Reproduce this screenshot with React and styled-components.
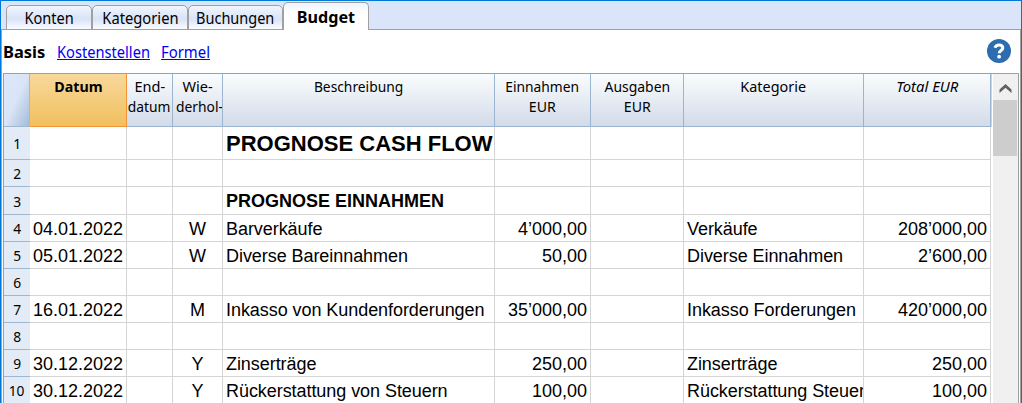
import React from 'react';
import styled, { createGlobalStyle, css } from 'styled-components';

const GlobalStyle = createGlobalStyle`
  * { box-sizing: border-box; }
  body { margin: 0; background: #fff; overflow: hidden; }
`;

const COLUMNS = '96px 1px 45px 1px 49px 1px 271px 1px 95px 1px 92px 1px 179px 1px 126px 1px';

const Window = styled.div`
  display: flex;
  flex-direction: column;
  width: 1022px;
  height: 403px;
  border: solid #0078d7;
  border-width: 1px 1px 0;
  background: #fff;
  color: #000;
  font: 16px/22px 'Noto Sans', 'Open Sans', sans-serif;
  overflow: hidden;
`;

const TabBar = styled.nav`
  display: flex;
  align-items: flex-end;
  flex: none;
  height: 29px;
  padding-left: 5px;
  background: linear-gradient(to top, #a0a0a0 1px, #dae5f9 1px);
`;

const Tab = styled.div`
  display: flex;
  justify-content: center;
  width: ${(p) => p.$width}px;
  height: 25px;
  padding-top: 1px;
  border: 1px solid #a0a0a0;
  border-radius: 5px 5px 0 0;
  background: linear-gradient(#f1f6fe 0, #dbe5f8 50%, #dbe5f8 60%, #fafcff 100%);
  ${(p) =>
    p.$active &&
    css`
      height: 28px;
      padding-top: 3px;
      border-bottom: 0;
      background: linear-gradient(#edf3fe 0, #fff 40%);
      font-weight: bold;
    `}
`;

const Fit = styled.span`
  display: inline-block;
  white-space: nowrap;
  transform: scaleX(${(p) => p.$x});
  transform-origin: ${(p) => p.$from || 'center'};
  text-decoration: inherit;
  text-underline-offset: inherit;
`;

const Body = styled.main`
  display: flex;
  flex-direction: column;
  flex: 1;
  min-height: 0;
  border: solid #a0a0a0;
  border-width: 0 1px;
  padding: 0 1px;
`;

const ViewBar = styled.div`
  display: flex;
  align-items: center;
  flex: none;
  height: 43px;
  padding-right: 8px;
`;

const View = styled.a`
  flex: none;
  width: ${(p) => p.$width}px;
  color: ${(p) => (p.$current ? '#000' : '#0000f5')};
  font-weight: ${(p) => (p.$current ? 'bold' : 'normal')};
  text-decoration: ${(p) => (p.$current ? 'none' : 'underline 1px')};
  text-decoration-skip-ink: none;
  text-underline-offset: 1px;
`;

const HelpIcon = styled.svg`
  display: block;
  flex: none;
  width: 24px;
  height: 24px;
  margin: 0 0 2px auto;
`;

const Sheet = styled.section`
  display: flex;
  flex: 1;
  min-height: 0;
  border: solid #a0a0a0;
  border-width: 1px 1px 0;
`;

const Grid = styled.div`
  flex: none;
  width: 989px;
`;

const HeaderRow = styled.div`
  display: grid;
  grid-template-columns: 26px ${COLUMNS} 1px;
  height: 53px;
`;

const Corner = styled.div`
  border-right: 1px solid #a3bad3;
  border-bottom: 1px solid #9db7d3;
  background: linear-gradient(115deg, #dce7fb 0, #d9e4f6 50%, #a5bbd8 100%);
`;

const HeaderCell = styled.div`
  grid-column: span 2;
  padding: 2px 0 0;
  border-right: 1px solid #9bb5d1;
  border-bottom: 1px solid #9bb5d1;
  background: linear-gradient(#fafdfe, #d3dbe9);
  font-size: 15px;
  line-height: 20px;
  font-style: ${(p) => (p.$italic ? 'italic' : 'normal')};
  overflow: hidden;
  ${(p) =>
    p.$selected &&
    css`
      border-color: #f29436;
      background: linear-gradient(#f8d89b, #f1c05e);
      font-weight: bold;
    `}
`;

const HeaderLine = styled.div`
  display: flex;
  justify-content: center;
  padding-left: ${(p) => p.$indent || 0}px;
`;

const HeaderEdge = styled.div`
  background: #c3d6f4;
`;

const Row = styled.div`
  display: grid;
  grid-template-columns: 26px ${COLUMNS};
  height: ${(p) => p.$height}px;
`;

const RowNumber = styled.div`
  display: flex;
  align-items: center;
  justify-content: center;
  border-bottom: 1px solid #9db7d3;
  background: #e3ebf7;
  font-size: 15px;
  line-height: 20px;
`;

const Cell = styled.div`
  grid-column: span 2;
  display: flex;
  align-items: center;
  justify-content: ${(p) => p.$align || 'flex-start'};
  min-width: 0;
  padding: 1px 3px 0;
  border-right: 1px solid #d4d4d4;
  border-bottom: 1px solid #d4d4d4;
  font: ${(p) => (p.$heading ? 'bold' : 'normal')} ${(p) => (p.$heading === 'large' ? 22 : 18)}px/20px
    'Liberation Sans', Arial, sans-serif;
  letter-spacing: ${(p) => (p.$prose ? '-0.06px' : 'normal')};
  white-space: nowrap;
  overflow: hidden;
`;

const ScrollBar = styled.div`
  display: flex;
  flex-direction: column;
  width: 25px;
  padding-right: 1px;
  margin-left: auto;
  background: #f0f0f0;
`;

const ScrollButton = styled.svg`
  display: block;
  width: 24px;
  height: 26px;
`;

const Thumb = styled.div`
  height: 56px;
  background: #cdcdcd;
`;

const tabs = [
  { label: 'Konten', width: 86, x: 0.91 },
  { label: 'Kategorien', width: 96, x: 0.92 },
  { label: 'Buchungen', width: 95, x: 0.905 },
  { label: 'Budget', width: 86, x: 1.01, active: true },
];

const headers = [
  { lines: [['Datum', 0.95]], selected: true },
  { lines: [['End-', 0.97], ['datum', 0.92]] },
  { lines: [['Wie-', 0.97], ['derhol-', 0.92, 3]] },
  { lines: [['Beschreibung', 0.92]] },
  { lines: [['Einnahmen', 0.92], ['EUR', 0.94]] },
  { lines: [['Ausgaben', 0.93], ['EUR', 0.94]] },
  { lines: [['Kategorie', 0.96]] },
  { lines: [['Total EUR', 0.99]], italic: true },
];

const rows = [
  { height: 33, text: 'PROGNOSE CASH FLOW', heading: 'large' },
  { height: 27 },
  { height: 28, text: 'PROGNOSE EINNAHMEN', heading: 'small' },
  { date: '04.01.2022', repeat: 'W', text: 'Barverkäufe', income: '4’000,00', category: 'Verkäufe', total: '208’000,00' },
  { date: '05.01.2022', repeat: 'W', text: 'Diverse Bareinnahmen', income: '50,00', category: 'Diverse Einnahmen', total: '2’600,00' },
  {},
  { date: '16.01.2022', repeat: 'M', text: 'Inkasso von Kundenforderungen', income: '35’000,00', category: 'Inkasso Forderungen', total: '420’000,00' },
  {},
  { date: '30.12.2022', repeat: 'Y', text: 'Zinserträge', income: '250,00', category: 'Zinserträge', total: '250,00' },
  { date: '30.12.2022', repeat: 'Y', text: 'Rückerstattung von Steuern', income: '100,00', category: 'Rückerstattung Steuern', total: '100,00' },
];

export default function App() {
  return (
    <>
      <GlobalStyle />
      <Window>
        <TabBar>
          {tabs.map((t) => (
            <Tab key={t.label} $width={t.width} $active={t.active}>
              <Fit $x={t.x}>{t.label}</Fit>
            </Tab>
          ))}
        </TabBar>
        <Body>
          <ViewBar>
            <View $current $width={54}>
              <Fit $x={1.03} $from="left">Basis</Fit>
            </View>
            <View $width={104}>
              <Fit $x={0.915} $from="left">Kostenstellen</Fit>
            </View>
            <View $width={60}>
              <Fit $x={0.93} $from="left">Formel</Fit>
            </View>
            <HelpIcon viewBox="0 0 24 24">
              <circle cx="12" cy="12" r="12" fill="#2c6db0" />
              <path
                d="M7.9 8.7C8.6 6.8 10 5.9 12 5.9c2.3 0 3.8 1.2 3.8 3 0 2.6-3.6 2.6-3.6 5.3"
                fill="none"
                stroke="#fff"
                strokeWidth="3"
              />
              <circle cx="12.1" cy="17.7" r="1.9" fill="#fff" />
            </HelpIcon>
          </ViewBar>
          <Sheet>
            <Grid>
              <HeaderRow>
                <Corner />
                {headers.map((h, i) => (
                  <HeaderCell key={i} $selected={h.selected} $italic={h.italic}>
                    {h.lines.map(([label, x, indent]) => (
                      <HeaderLine key={label} $indent={indent}>
                        <Fit $x={x}>{label}</Fit>
                      </HeaderLine>
                    ))}
                  </HeaderCell>
                ))}
                <HeaderEdge />
              </HeaderRow>
              {rows.map((r, i) => (
                <Row key={i} $height={r.height || 27}>
                  <RowNumber>
                    <Fit $x={0.92}>{i + 1}</Fit>
                  </RowNumber>
                  <Cell>{r.date}</Cell>
                  <Cell />
                  <Cell $align="center">{r.repeat}</Cell>
                  <Cell $heading={r.heading} $prose={!r.heading}>{r.text}</Cell>
                  <Cell $align="flex-end">{r.income}</Cell>
                  <Cell />
                  <Cell $prose>{r.category}</Cell>
                  <Cell $align="flex-end">{r.total}</Cell>
                </Row>
              ))}
            </Grid>
            <ScrollBar>
              <ScrollButton viewBox="0 0 24 26">
                <path d="M6.5 19V15.6L12.5 10L18.5 15.6V19L12.5 13.8Z" fill="#606060" />
              </ScrollButton>
              <Thumb />
            </ScrollBar>
          </Sheet>
        </Body>
      </Window>
    </>
  );
}
